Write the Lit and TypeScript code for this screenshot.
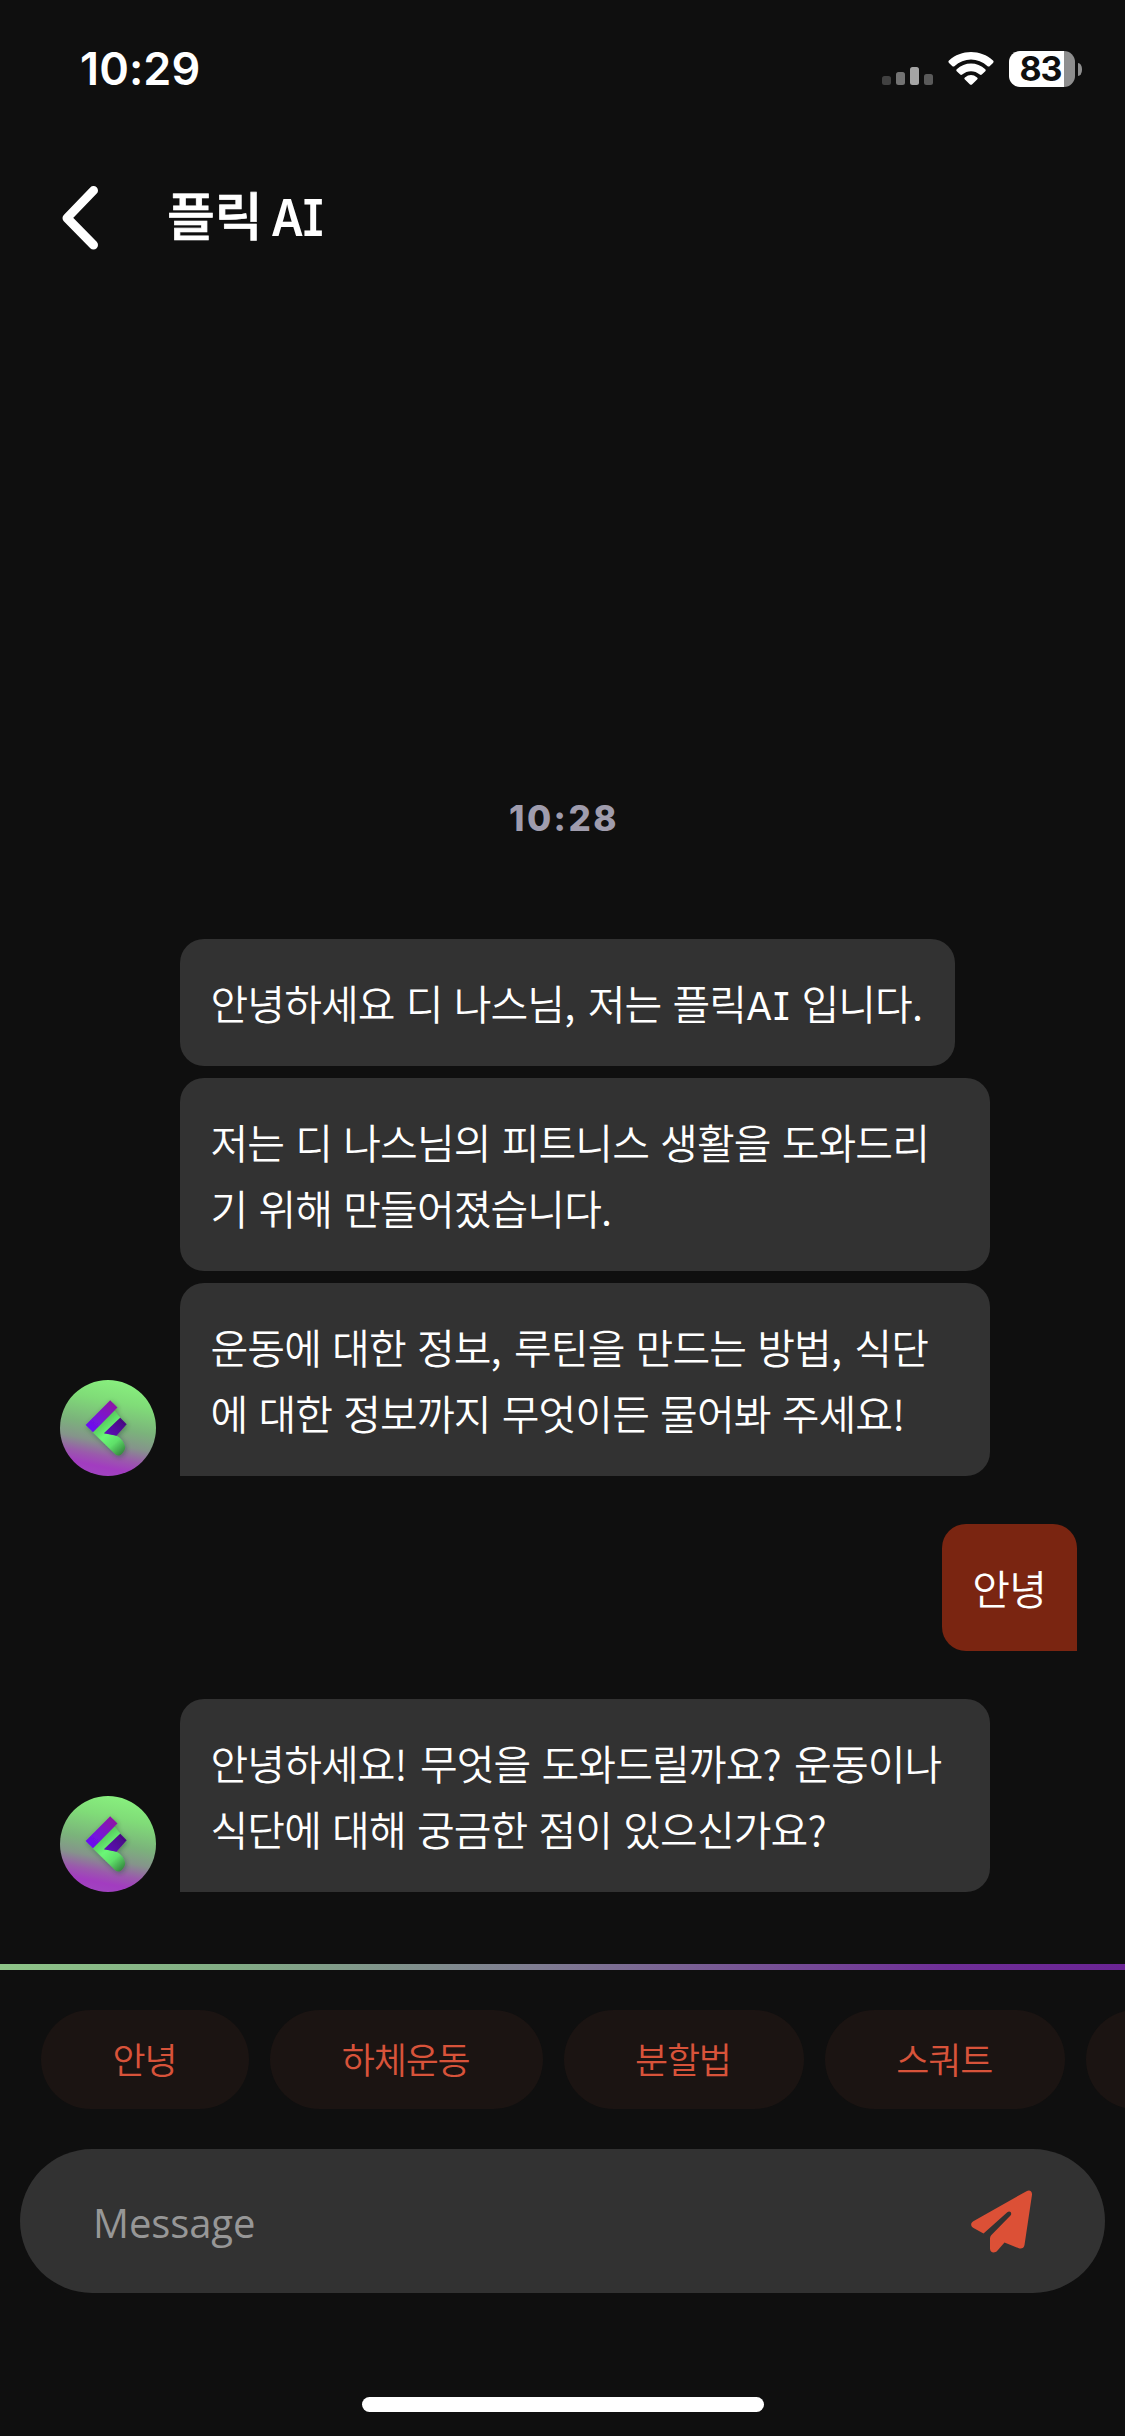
import { LitElement, html, svg, css } from "lit";
import { customElement, property } from "lit/decorators.js";

interface MessageGroup {
  from: "bot" | "me";
  bubbles: string[][];
}

const GROUPS: MessageGroup[] = [
  {
    from: "bot",
    bubbles: [
      ["안녕하세요 디 나스님, 저는 플릭AI 입니다."],
      ["저는 디 나스님의 피트니스 생활을 도와드리", "기 위해 만들어졌습니다."],
      ["운동에 대한 정보, 루틴을 만드는 방법, 식단", "에 대한 정보까지 무엇이든 물어봐 주세요!"],
    ],
  },
  { from: "me", bubbles: [["안녕"]] },
  {
    from: "bot",
    bubbles: [["안녕하세요! 무엇을 도와드릴까요? 운동이나", "식단에 대해 궁금한 점이 있으신가요?"]],
  },
];

const CHIPS = ["안녕", "하체운동", "분할법", "스쿼트", ""];

@customElement("status-bar")
export class StatusBar extends LitElement {
  static styles = css`
    :host {
      display: flex;
      justify-content: space-between;
      height: 138px;
      padding: 0 43px 0 80px;
      box-sizing: border-box;
      font-family: Inter, sans-serif;
    }
    .clock {
      margin-top: 42px;
      font-size: 45px;
      line-height: 54px;
      font-weight: 600;
      color: #fff;
      letter-spacing: 0.1px;
    }
    .icons {
      display: flex;
      align-items: flex-end;
      height: 87px;
    }
    .signal {
      margin: 0 15px 2px 0;
    }
    .wifi {
      margin: 0 15px 2px 0;
    }
    .battery {
      display: flex;
      align-items: center;
      justify-content: center;
      width: 66px;
      height: 36px;
      border-radius: 11px;
      background: linear-gradient(90deg, #fff 55px, #8e8e8e 55px);
      color: #0f0f0f;
      font-size: 34px;
      line-height: 36px;
      font-weight: 700;
      letter-spacing: -1px;
    }
    .level {
      margin-right: 3px;
    }
    .nub {
      width: 4px;
      height: 13px;
      margin: 0 0 11px 3px;
      border-radius: 0 4px 4px 0 / 0 6px 6px 0;
      background: #8e8e8e;
    }
    svg {
      display: block;
    }
  `;

  render() {
    return html`
      <div class="clock">10:29</div>
      <div class="icons">
        <svg class="signal" width="51" height="18" viewBox="0 0 51 18">
          <rect x="0" y="9" width="9" height="9" rx="2.5" fill="#414141" />
          <rect x="14" y="5" width="9" height="13" rx="2.5" fill="#737373" />
          <rect x="28" y="0" width="9" height="18" rx="2.5" fill="#a5a5a5" />
          <rect x="42" y="7" width="9" height="11" rx="2.5" fill="#5a5a5a" />
        </svg>
        <svg class="wifi" width="46" height="33" viewBox="0 0 46 33" fill="#fff">
          <path d="M1 8.6C13 -2.8 33 -2.8 45 8.6Q46.2 9.8 45 11L41.6 14.2Q40.6 15 39.6 14.2C30 5.2 16 5.2 6.4 14.2Q5.4 15 4.4 14.2L1 11Q-.2 9.8 1 8.6Z" />
          <path d="M8.7 17.2C16.8 9.6 29.2 9.6 37.3 17.2Q38.3 18.2 37.3 19.3L33.8 22.6Q32.8 23.4 31.8 22.6C26.6 18 19.4 18 14.2 22.6Q13.2 23.4 12.2 22.6L8.7 19.3Q7.7 18.2 8.7 17.2Z" />
          <path d="M16.9 25.4Q23 20.6 29.1 25.4Q30.2 26.4 29.1 27.4L24 32.4Q23 33.3 22 32.4L16.9 27.4Q15.8 26.4 16.9 25.4Z" />
        </svg>
        <div class="battery"><span class="level">83</span></div>
        <div class="nub"></div>
      </div>
    `;
  }
}

@customElement("bot-avatar")
export class BotAvatar extends LitElement {
  static styles = css`
    :host {
      display: block;
      width: 96px;
      height: 96px;
    }
    svg {
      display: block;
    }
  `;

  render() {
    return svg`
      <svg width="96" height="96" viewBox="0 0 96 96">
        <defs>
          <linearGradient id="disc" x1="0.6" y1="0" x2="0.4" y2="1">
            <stop offset="0" stop-color="#88f07e" />
            <stop offset="0.22" stop-color="#80dc78" />
            <stop offset="0.48" stop-color="#7bb37b" />
            <stop offset="0.65" stop-color="#85948b" />
            <stop offset="0.79" stop-color="#9a5aac" />
            <stop offset="0.9" stop-color="#a23cc0" />
            <stop offset="1" stop-color="#a043c0" />
          </linearGradient>
          <linearGradient id="bar" x1="0.85" y1="0.1" x2="0.15" y2="0.9">
            <stop offset="0" stop-color="#8d17a6" />
            <stop offset="1" stop-color="#6a10f4" />
          </linearGradient>
          <linearGradient id="arm" x1="0.9" y1="0.2" x2="0.1" y2="0.9">
            <stop offset="0" stop-color="#480680" />
            <stop offset="1" stop-color="#5c0cb8" />
          </linearGradient>
          <linearGradient id="leg" x1="0.35" y1="0.2" x2="0.85" y2="1">
            <stop offset="0" stop-color="#55c85b" />
            <stop offset="0.35" stop-color="#6bf777" />
            <stop offset="0.65" stop-color="#5fe06a" />
            <stop offset="1" stop-color="#35883f" />
          </linearGradient>
          <filter id="soft" x="-30%" y="-30%" width="160%" height="160%">
            <feDropShadow dx="1" dy="1.5" stdDeviation="2.4" flood-color="#1d3a22" flood-opacity="0.4" />
          </filter>
        </defs>
        <circle cx="48" cy="48" r="48" fill="url(#disc)" />
        <g filter="url(#soft)">
          <path fill="url(#leg)" d="M32.5 52L54 30L60 37.5L44 53.3L54 55C60 57 64 61 65 66.5C65.500 69 64 71 62.500 73C61 75.500 58 76.500 55.500 74.500Z" />
          <path fill="url(#arm)" d="M60.300 37.700L66.700 44.300L56.500 55.800L44 53.300Z" />
          <path fill="url(#bar)" d="M50.200 20.300L57.500 27.500L33 52.300L25.600 45Z" />
        </g>
      </svg>
    `;
  }
}

@customElement("chat-bubble")
export class ChatBubble extends LitElement {
  @property({ attribute: false }) lines: string[] = [];

  static styles = css`
    :host {
      display: block;
      box-sizing: border-box;
      padding: 29.500px 31px 31.500px 30.500px;
      border-radius: 24px;
      background: #323232;
      color: #fff;
      font-family: "Noto Sans CJK KR", sans-serif;
      font-size: 41px;
      line-height: 66px;
      font-weight: 350;
      letter-spacing: -0.9px;
      word-spacing: 2.9px;
      white-space: nowrap;
    }
    :host(.wide) {
      width: 810px;
    }
    :host(.me) {
      background: #7a2511;
    }
    :host(.tail-left) {
      border-bottom-left-radius: 0;
    }
    :host(.tail-right) {
      border-bottom-right-radius: 0;
    }
    .line {
      height: 66px;
    }
    .latin {
      font-family: Inter, sans-serif;
      font-size: 38px;
      font-weight: 400;
      line-height: 1;
      letter-spacing: 0.6px;
      font-feature-settings: "cv08";
    }
    .mark {
      letter-spacing: 1.3px;
    }
  `;

  private part(text: string) {
    if (text === "AI") return html`<span class="latin">${text}</span>`;
    if (/^[,.!?]$/.test(text)) return html`<span class="mark">${text}</span>`;
    return text;
  }

  render() {
    return this.lines.map((line) => html`<div class="line">${line.split(/(AI|[,.!?])/).map((text) => this.part(text))}</div>`);
  }
}

@customElement("app-root")
export class AppRoot extends LitElement {
  static styles = css`
    :host {
      display: flex;
      flex-direction: column;
      width: 1125px;
      height: 2436px;
      overflow: hidden;
      background: #0f0f0f;
      font-family: "Noto Sans CJK KR", sans-serif;
    }
    .header {
      display: flex;
      align-items: center;
      height: 160px;
      padding-left: 60px;
      gap: 65px;
    }
    .back,
    .send {
      display: block;
    }
    .title {
      margin: 0;
      padding-bottom: 4px;
      color: #fff;
      font-size: 52px;
      line-height: 76px;
      font-weight: 500;
      word-spacing: -3.500px;
      -webkit-text-stroke: 0.7px #fff;
    }
    .latin {
      display: inline-block;
      transform: scaleX(0.88);
      transform-origin: left;
      font-family: Inter, sans-serif;
      font-weight: 600;
      font-size: 51px;
      font-feature-settings: "cv08";
      letter-spacing: -1px;
      -webkit-text-stroke: 0;
    }
    .feed {
      display: flex;
      flex-direction: column;
      justify-content: flex-end;
      flex: 1;
      gap: 48px;
      padding: 0 48px 72px 60px;
    }
    .stamp {
      align-self: center;
      margin: 0 9px 52px 0;
      color: #9f9cad;
      font-family: Inter, sans-serif;
      font-size: 35px;
      line-height: 42px;
      font-weight: 800;
      letter-spacing: 2.500px;
    }
    .group {
      display: flex;
      align-items: flex-end;
      gap: 24px;
    }
    .group.me {
      justify-content: flex-end;
    }
    .stack {
      display: flex;
      flex-direction: column;
      align-items: flex-start;
      gap: 12px;
    }
    .rule {
      height: 6px;
      background: linear-gradient(90deg, #8ec488 0%, #82ad85 20%, #7f7c92 48%, #6f2f98 84%, #6a2494 100%);
    }
    .chips {
      display: flex;
      gap: 21px;
      padding: 39.500px 0 40.500px 41px;
      overflow: hidden;
    }
    .chip {
      flex: none;
      box-sizing: border-box;
      height: 99px;
      padding: 0 73px 2px 71.500px;
      border-radius: 49.500px;
      background: #1b1412;
      color: #d8533a;
      font-size: 36px;
      line-height: 96px;
      font-weight: 350;
      letter-spacing: -1.2px;
    }
    .composer {
      display: flex;
      align-items: center;
      justify-content: space-between;
      box-sizing: border-box;
      height: 144px;
      margin: 0 20px;
      padding: 0 72px 0 73px;
      border-radius: 72px;
      background: #323232;
    }
    .placeholder {
      padding-top: 3px;
      color: #979797;
      font-family: "Open Sans", sans-serif;
      font-size: 40px;
      line-height: 60px;
      font-weight: 400;
      letter-spacing: -0.1px;
    }
    .home {
      align-self: center;
      width: 402px;
      height: 15px;
      margin: 104px 0 24px;
      border-radius: 8px;
      background: #fff;
    }
  `;

  render() {
    return html`
      <status-bar></status-bar>
      <div class="header">
        <svg class="back" width="42" height="68" viewBox="0 0 42 68" fill="none" stroke="#fff" stroke-width="9" stroke-linecap="round" stroke-linejoin="round">
          <path d="M33.500 6.500L7 34L33.500 61" />
        </svg>
        <h1 class="title">플릭 <span class="latin">AI</span></h1>
      </div>
      <div class="feed">
        <div class="stamp">10:28</div>
        ${GROUPS.map(
          (group) => html`
            <div class="group ${group.from}">
              ${group.from === "bot" ? html`<bot-avatar></bot-avatar>` : ""}
              <div class="stack">
                ${group.bubbles.map((lines, i) => {
                  const last = i === group.bubbles.length - 1;
                  const tail = last ? (group.from === "me" ? "tail-right" : "tail-left") : "";
                  return html`<chat-bubble class="${group.from} ${lines.length > 1 ? "wide" : ""} ${tail}" .lines=${lines}></chat-bubble>`;
                })}
              </div>
            </div>
          `
        )}
      </div>
      <div class="rule"></div>
      <div class="chips">${CHIPS.map((chip) => html`<div class="chip">${chip}</div>`)}</div>
      <div class="composer">
        <span class="placeholder">Message</span>
        <svg class="send" width="62" height="63" viewBox="0 0 62 63" fill="#dc5036">
          <path d="M55.500 1.200C58.500 -0.600 61.400 1.200 61 4.800L53.500 55C53 58 50.500 59.200 47.800 58.200L33.500 52.500L26.500 60.500C23.500 64 19 62.500 19 58.500V48.500Q19 46.800 20.200 45.300L39.500 25.500C41.500 23 38.800 20.200 36.300 22.300L12.500 43.500L2.500 38C-0.600 36.200 -0.600 32.800 2.300 31.200Z" />
        </svg>
      </div>
      <div class="home"></div>
    `;
  }
}
